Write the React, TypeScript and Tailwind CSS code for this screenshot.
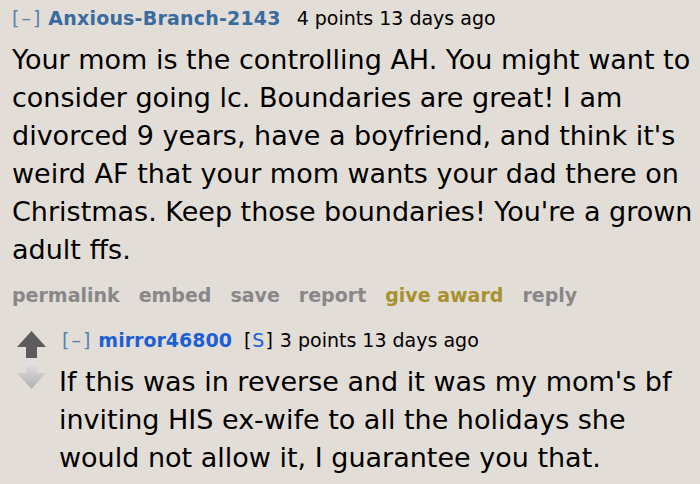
const bodyLines = [
  "Your mom is the controlling AH. You might want to",
  "consider going lc. Boundaries are great! I am",
  "divorced 9 years, have a boyfriend, and think it's",
  "weird AF that your mom wants your dad there on",
  "Christmas. Keep those boundaries! You're a grown",
  "adult ffs.",
];

const replyLines = [
  "If this was in reverse and it was my mom's bf",
  "inviting HIS ex-wife to all the holidays she",
  "would not allow it, I guarantee you that.",
];

export default function App() {
  return (
    <div className="h-[484px] w-[700px] overflow-hidden bg-[#e3ddd7] pl-3 pt-[5px] font-['DejaVu_Sans',Verdana,sans-serif] text-black">
      <div className="flex items-baseline whitespace-nowrap text-[19px] leading-[26px]">
        <span className="tracking-[2px] text-[#5a82ad]">[–]</span>
        <span className="ml-[6px] font-bold tracking-[0.2px] text-[#3a6b9f]">Anxious-Branch-2143</span>
        <span className="ml-[16px]">4 points 13 days ago</span>
      </div>

      <div className="mt-[10px] text-[27px] leading-[38px]">
        {bodyLines.map((l) => (
          <div key={l} className="whitespace-nowrap">{l}</div>
        ))}
      </div>

      <div className="mt-[13px] flex gap-[19px] whitespace-nowrap text-[19px] font-bold leading-[26px] text-[#888888]">
        <span>permalink</span>
        <span>embed</span>
        <span>save</span>
        <span>report</span>
        <span className="text-[#a8912f]">give award</span>
        <span>reply</span>
      </div>

      <div className="mt-[19px] flex">
        <div className="flex w-[47px] shrink-0 flex-col items-start pl-[5px] pt-[4px]">
          <svg width="29" height="27" viewBox="0 0 29 27">
            <polygon points="14.5,0 29,16 20,16 20,27 9,27 9,16 0,16" fill="#5c5c5c" />
          </svg>
          <svg width="29" height="27" viewBox="0 0 29 27" className="mt-[4px]">
            <defs>
              <linearGradient id="dn" x1="0" y1="0" x2="0" y2="1">
                <stop offset="0" stopColor="#e2e2e2" />
                <stop offset="1" stopColor="#b0b0b0" />
              </linearGradient>
            </defs>
            <polygon points="9,0 20,0 20,11 29,11 14.5,27 0,11 9,11" fill="url(#dn)" />
          </svg>
        </div>
        <div className="flex-1">
          <div className="flex items-baseline whitespace-nowrap pl-[3px] text-[19px] leading-[26px]">
            <span className="tracking-[2px] text-[#5a82ad]">[–]</span>
            <span className="ml-[6px] font-bold text-[#1f5fd6]">mirror46800</span>
            <span className="ml-[12px] tracking-[1px]">
              [<span className="text-[#1f5fd6]">S</span>]
            </span>
            <span className="ml-[6px]">3 points 13 days ago</span>
          </div>
          <div className="mt-[10px] text-[27px] leading-[38px]">
            {replyLines.map((l) => (
              <div key={l} className="whitespace-nowrap">{l}</div>
            ))}
          </div>
        </div>
      </div>
    </div>
  );
}
